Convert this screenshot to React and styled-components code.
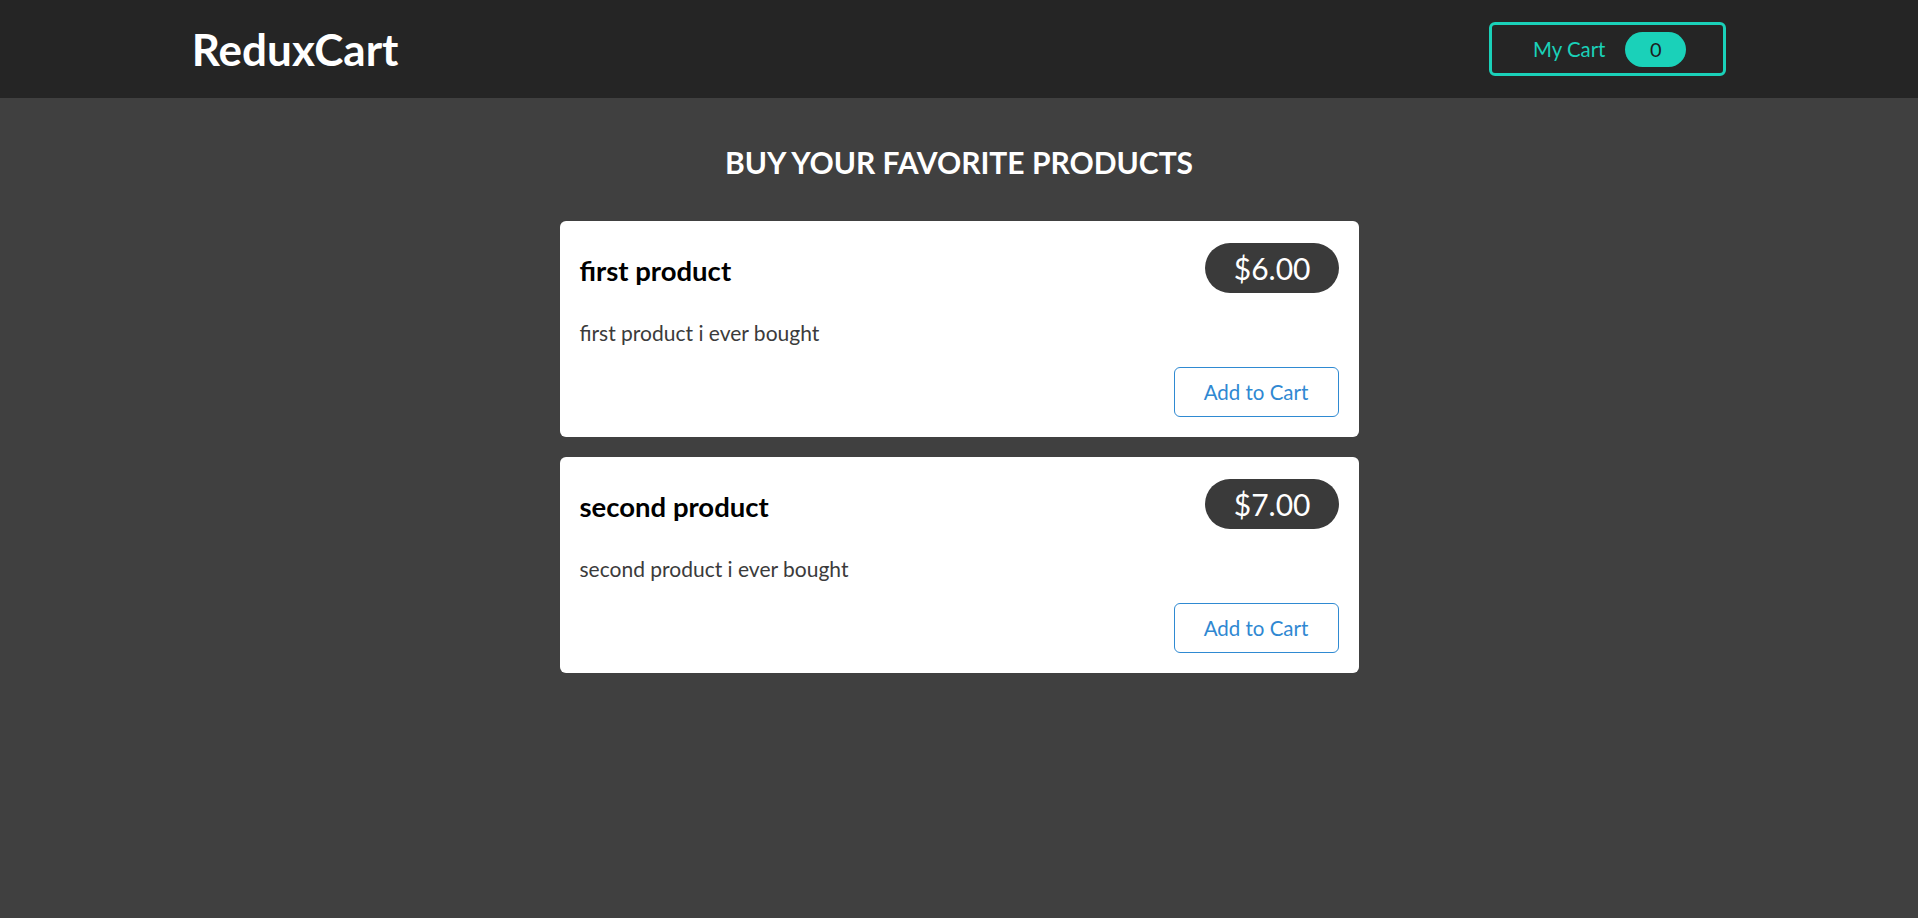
import React, { useState } from 'react';
import styled, { createGlobalStyle } from 'styled-components';

const GlobalStyle = createGlobalStyle`
  * { box-sizing: border-box; }
  body {
    margin: 0;
    background: #404040;
    font-family: Lato, "Noto Sans", sans-serif;
    min-height: 100vh;
  }
`;

const products = [
  { id: 'p1', title: 'first product', price: 6, description: 'first product i ever bought' },
  { id: 'p2', title: 'second product', price: 7, description: 'second product i ever bought' },
];

const App = () => {
  const [cartCount, setCartCount] = useState(0);

  return (
    <>
      <GlobalStyle />
      <Header>
        <HeaderInner>
          <Logo>ReduxCart</Logo>
          <CartButton>
            <span>My Cart</span>
            <Badge>{cartCount}</Badge>
          </CartButton>
        </HeaderInner>
      </Header>

      <Main>
        <Heading>BUY YOUR FAVORITE PRODUCTS</Heading>
        <List>
          {products.map(p => (
            <Card key={p.id}>
              <CardHead>
                <Title>{p.title}</Title>
                <Price>${p.price.toFixed(2)}</Price>
              </CardHead>
              <Description>{p.description}</Description>
              <Actions>
                <AddButton onClick={() => setCartCount(c => c)}>Add to Cart</AddButton>
              </Actions>
            </Card>
          ))}
        </List>
      </Main>
    </>
  );
};

export default App;

const Header = styled.header`
  height: 98px;
  background: #252525;
  display: flex;
  align-items: center;
`;

const HeaderInner = styled.div`
  width: 80%;
  margin: 0 auto;
  display: flex;
  align-items: center;
  justify-content: space-between;
`;

const Logo = styled.h1`
  margin: 0;
  color: #fff;
  font-size: 44px;
  font-weight: 700;
  line-height: 1;
`;

const CartButton = styled.button`
  width: 237px;
  height: 54px;
  display: flex;
  align-items: center;
  justify-content: center;
  gap: 20px;
  background: transparent;
  border: 3px solid #1ad1b9;
  border-radius: 6px;
  color: #1ad1b9;
  font-family: Lato, "Noto Sans", sans-serif;
  font-size: 20.4px;
  cursor: pointer;
  padding: 0 0 0 4px;
`;

const Badge = styled.span`
  width: 61px;
  height: 35px;
  border-radius: 18px;
  background: #1ad1b9;
  color: #1d1d1d;
  display: flex;
  align-items: center;
  justify-content: center;
  font-size: 20px;
`;

const Main = styled.main`
  display: flex;
  flex-direction: column;
  align-items: center;
  padding-top: 46px;
`;

const Heading = styled.h2`
  margin: 0 0 41px;
  color: #fff;
  font-size: 30px;
  font-weight: 700;
  line-height: 36px;
`;

const List = styled.ul`
  list-style: none;
  margin: 0;
  padding: 0;
  width: 799px;
  display: flex;
  flex-direction: column;
  gap: 20px;
`;

const Card = styled.li`
  background: #fff;
  border-radius: 6px;
  padding: 22px 20px 20px 20px;
  display: flex;
  flex-direction: column;
`;

const CardHead = styled.div`
  display: flex;
  align-items: center;
  justify-content: space-between;
`;

const Title = styled.h3`
  margin: 0;
  padding-top: 4px;
  font-size: 27.5px;
  font-weight: 700;
  color: #000;
`;

const Price = styled.div`
  height: 50px;
  padding: 0 28px 0 29px;
  border-radius: 25px;
  background: #3a3a3a;
  color: #fff;
  font-size: 30px;
  display: flex;
  align-items: center;
`;

const Description = styled.p`
  margin: 25px 0 19px;
  font-size: 21px;
  line-height: 30px;
  color: #3b3b3b;
`;

const Actions = styled.div`
  display: flex;
  justify-content: flex-end;
`;

const AddButton = styled.button`
  width: 165px;
  height: 50px;
  background: #fff;
  border: 1px solid #2f8ad2;
  border-radius: 6px;
  color: #2f88d2;
  font-family: Lato, "Noto Sans", sans-serif;
  font-size: 20.5px;
  cursor: pointer;
`;
